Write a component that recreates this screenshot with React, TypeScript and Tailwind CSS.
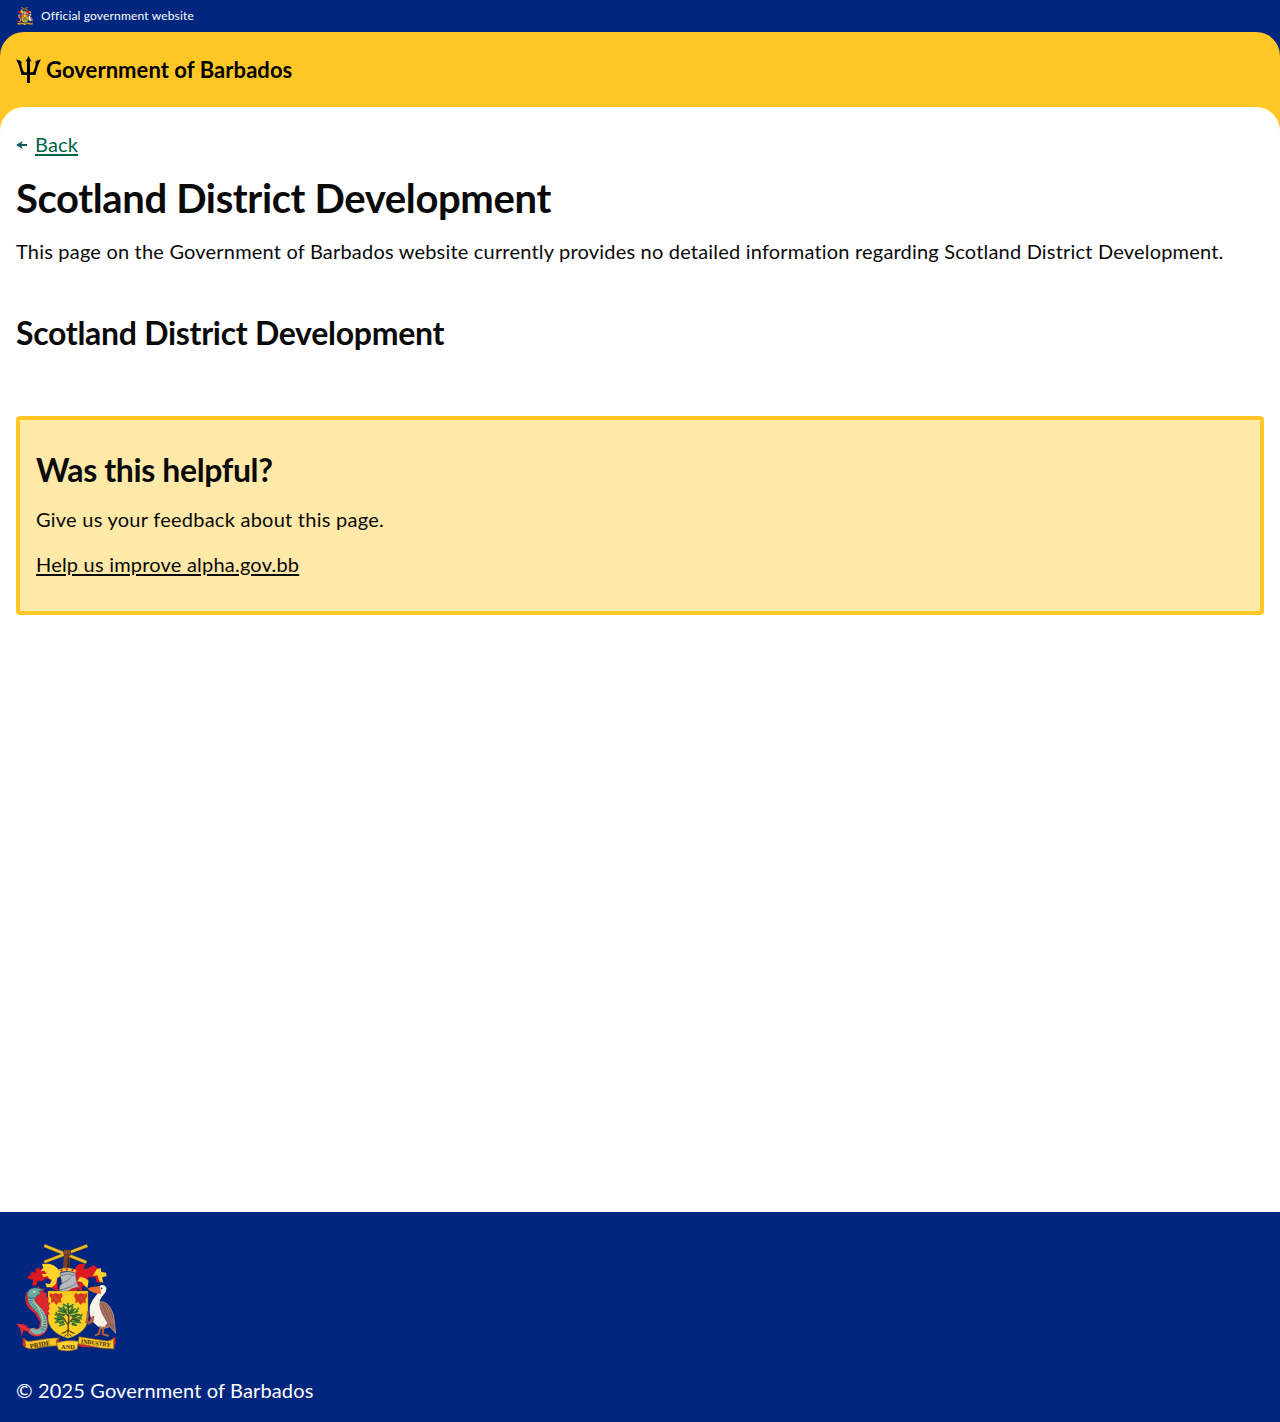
import React from "react";

function CoatOfArms({ className }: { className: string }) {
  return (
    <svg viewBox="0 0 100 108" className={className} aria-label="Coat of arms of Barbados">
      <g transform="translate(-2 -2) scale(.33333)">
        {/* mantling */}
        <path d="M128 92C112 72 96 72 78 82l-4-6-10 6 2 10-14-4-2 12-12 4 6 6 14 4-4 14 12 4 6-16 12 2 12-10 14 6-2 22 24 12z" fill="#dc1822" />
        <path d="M136 86C120 62 98 64 84 66l4 12-8 10 12-2 6 10-14 0 4 10 12-4 6 8 8 4-6 12-14-2 4 12 16 0 12-10 4-18 14-8z" fill="#ffd32c" />
        <path d="M180 90c4-20 14-28 34-24l-6 16 16-4 14-8 14 8 8 10 12 4 2 12-14 4 2 16-14-4-4-14-20 0-4 14 2 14-16-2-4 18-20-20z" fill="#dc1822" />
        <path d="M248 82l12-4 2 12 14 2 2 10-14 4 4 16-12-4-6-18-14 2zM198 104l14 4 12 8-4 22-10-8-6-10-14-2z" fill="#ffd32c" />
        {/* raised arm and crossed canes */}
        <path d="M150 40h18l-2 44h-20z" fill="#7b432c" />
        <path d="M164 40l-2 42" stroke="#4b2518" strokeWidth="5" />
        <path d="M91 11L217 61M220 11L91 60" stroke="#8a6a20" strokeWidth="10" />
        <path d="M91 11L217 61M220 11L91 60" stroke="#f2bd26" strokeWidth="7" />
        <path d="M147 29l6-7 17 3 3 12-8 8-15-3z" fill="#6d3c28" />
        <path d="M153 26l-1 10M159 26l-1 10M165 28v9" stroke="#a67041" strokeWidth="2" />
        {/* helmet */}
        <path d="M138 94q24-10 46 0l3 22 8 22q-20 0-35 13l-22-4q-5-16 6-22z" fill="#b6b9bd" stroke="#62666c" strokeWidth="2" />
        <path d="M140 101q20-9 42 0M144 124q20-8 28-19M139 143q30-4 50-21" fill="none" stroke="#74777b" strokeWidth="3" />
        <path d="M158 151q11-14 36-17l-5 12-11 6z" fill="#d41820" />
        <path d="M132 88q27-11 54 0" fill="none" stroke="#f4c62d" strokeWidth="9" />
        <path d="M141 83l3 5M157 80l3 5M174 82l3 5" stroke="#d31920" strokeWidth="6" />
        {/* shield */}
        <path d="M102 147h120v80c0 28-20 49-60 62-40-13-60-34-60-62z" fill="#fcce22" stroke="#a77b20" strokeWidth="1.500" />
        <path d="M108 153l9 4 9-4 9 4 9-4 2 10-6 8 3 11-8-2-8 9-7-9-9 2 1-13-6-7zM184 153l9 4 9-4 8 4 9-4v12l-5 7 2 12-9-3-7 8-7-9-9 3 1-12-5-8 3-6z" fill="#dd3020" />
        <path d="M114 160l22 20M138 160l-22 20M190 160l22 20M213 160l-22 20" stroke="#a96620" strokeWidth="4" strokeDasharray="5 3" />
        <path d="M162 188q4 36 0 82M162 249l-13-20-17-10M163 244l18-19 17-8M162 222l-14-19M163 219l13-19M150 229l-22 5M176 231l22 4" fill="none" stroke="#564022" strokeWidth="4" />
        <path d="M162 263l-13 11M162 263l15 11M162 265v19M157 269l-14 5M168 269l14 5M158 277l-8 7M166 277l7 6" fill="none" stroke="#463016" strokeWidth="3" />
        <path d="M162 184v12M158 193l-10-6M164 197l13-9M159 203l-19-4M163 207l20-6M157 213l-24-6M165 215l26-7M152 218l-28 0M170 221l28-2M147 226l-24 4M176 228l26 2M151 237l-27 4M173 238l26 4M151 246l-14 5M175 247l12 3M145 210l-11-14M184 212l9-13M133 226l-6-15M195 229l9-11M153 207l-5-13M172 208l3-14" stroke="#387a38" strokeWidth="5" strokeLinecap="round" />
        <path d="M161 199l9-8M159 210l-14-5M166 213l14-8M151 222l-17-8M175 224l16-9M146 231l-19 4M178 233l18 5M150 241l-14 4M173 244l12 3" stroke="#165b30" strokeWidth="3.500" />
        {/* dolphin */}
        <path d="M63 145l12-14 2 9 17 0-8 9 13 4-3 10 8 6-3 10 8 5-5 8 3 8-5 8 6 9-20 4-20-35-10-26zM38 148c-8 22-4 40 9 53l16 14 15 25-5 30 18-20 3-13-9-25-22-23-10-25z" fill="#dc2630" />
        <path d="M51 152c-5 39 17 39 31 62 11 18 13 44-2 54-12 8-28 1-30-8" fill="none" stroke="#c52a34" strokeWidth="24" />
        <path d="M51 152c-5 39 17 39 31 62 11 18 13 44-2 54-12 8-28 1-30-8" fill="none" stroke="#7fb9b2" strokeWidth="18" />
        <path d="M49 160c-3 31 18 33 32 57 10 18 11 39 0 49" fill="none" stroke="#397f91" strokeWidth="14" strokeDasharray="3 4" />
        <path d="M57 179q15 10 25 37 8 20 4 37" fill="none" stroke="#d8d98a" strokeWidth="3" />
        <path d="M40 165c-3-19 12-30 29-27l19 4-13 6 6 8-12 4-5 9z" fill="#6bada5" stroke="#285f62" strokeWidth="2" />
        <circle cx="61" cy="149" r="3" fill="#f7e8ad" />
        <path d="M7 245l23 2 19 14-2 9-18-5-6 18-5-23z" fill="#df2732" />
        <path d="M12 248l31 16M49 268q17 21 38 5" fill="none" stroke="#df3942" strokeWidth="4" />
        {/* pelican */}
        <path d="M252 181c25-7 39 13 47 40l6 53-17-20-24 7c-22-13-30-36-27-61z" fill="#936254" stroke="#ddb2a0" strokeWidth="2" />
        <path d="M260 188l26 57M270 186l26 61M253 199l22 55M280 190l19 52" stroke="#b17c6a" strokeWidth="3" />
        <path d="M250 141c6-16 24-15 27-3 3 15-17 24-20 40-4 24 10 42 23 66l-12 15c-28-7-42-30-41-56 0-26 19-38 24-50z" fill="#f7f3e9" />
        <path d="M257 132l-27 4-10 4c10 10 25 15 42 15z" fill="#e96b2a" />
        <circle cx="263" cy="139" r="2.500" fill="#22212a" />
        <path d="M260 253l-5 23-12 4M268 254l-2 22 18 6M234 226l-7 17 8-5 3-16M227 241l-10-1 4-15M221 225v-17" fill="none" stroke="#b55b3f" strokeWidth="6" />
        {/* motto ribbon */}
        <path d="M26 286l14 14 77-5 20-11-3 20-92 15-16-8zM304 284l-25 15-86 0 0 12 12 4 90 2 10-10z" fill="#dc2630" />
        <path d="M30 288q3 10 17 10l61-9q14-2 26-1-12 7-3 23-43 2-67 9-17 4-31-4 4-10-3-28zM195 284l84 13q13 1 21-8-3 14 0 32-40 0-80-11-16-3-28-5z" fill="#f7c629" stroke="#8a5b1b" strokeWidth="2" />
        <path d="M127 302q35-10 67-4l-5 24q-28 9-56 1z" fill="#ffd231" stroke="#8a5b1b" strokeWidth="2" />
        <g fill="#3d2914" fontFamily="Liberation Serif" fontWeight="bold">
          <text x="49" y="320" fontSize="21" textLength="62" lengthAdjust="spacingAndGlyphs" transform="rotate(-10 49 320)">PRIDE</text>
          <text x="141" y="321" fontSize="20" textLength="42" lengthAdjust="spacingAndGlyphs">AND</text>
          <text x="200" y="304" fontSize="18" textLength="90" lengthAdjust="spacingAndGlyphs" transform="rotate(7 200 304)">INDUSTRY</text>
        </g>
      </g>
    </svg>
  );
}

function Trident() {
  return (
    <svg viewBox="0 0 25 27" className="h-[27px] w-[25px] shrink-0" fill="#000" aria-hidden="true">
      <path d="M12.500 0L15.500 5.800 14 5.300V16.300H17C18.700 13 19.500 9.800 19.900 6.500L18.500 7C19.900 4.700 22.200 3.900 25 3.500 22.300 7.500 20.900 13.200 19.500 19H14V27H11V19H5.500C4.100 13.200 2.700 7.500 0 3.500 2.800 3.900 5.100 4.700 6.500 7L5.100 6.500C5.500 9.800 6.300 13 8 16.300H11V5.300L9.500 5.800Z" />
    </svg>
  );
}

export default function App() {
  return (
    <div className="flex min-h-[1422px] flex-col bg-white font-['Lato',sans-serif] text-[20px] leading-[30px] text-[#0a0a0a]">
      <div className="bg-[#00267f]">
        <div className="flex h-8 items-center gap-2 px-4 text-white">
          <CoatOfArms className="h-[18px] w-[17px]" />
          <span className="text-[12px] leading-4 tracking-[0.16px]">Official government website</span>
        </div>
        <header className="rounded-t-[24px] bg-[#ffc726]">
          <div className="flex h-[75px] items-center gap-[5px] px-4">
            <Trident />
            <span className="text-[22px] font-bold leading-7 tracking-[0.06px] text-black">Government of Barbados</span>
          </div>
          <div className="h-6 rounded-t-[24px] bg-white" />
        </header>
      </div>
      <main className="-mt-0.5 flex-1 px-4">
        <a href="#" className="flex w-fit items-center gap-2 text-[#00654a]">
          <svg viewBox="0 0 11 8" className="mt-0.5 h-2 w-[11px]" fill="#0e5f64" aria-hidden="true">
            <path d="M0 4L6.800 0 5.600 3H11V5H5.600L6.800 8Z" />
          </svg>
          <span className="tracking-[0.15px] underline decoration-2 underline-offset-2">Back</span>
        </a>
        <h1 className="mt-4 w-fit text-[40px] font-bold leading-[46px] tracking-[-0.37px]">Scotland District Development</h1>
        <p className="mt-[15px] w-fit whitespace-nowrap tracking-[0.194px]">This page on the Government of Barbados website currently provides no detailed information regarding Scotland District Development.</p>
        <h2 className="mt-[47px] w-fit text-[32px] font-bold leading-10 tracking-[-0.29px]">Scotland District Development</h2>
        <section className="mt-[63px] h-[199px] rounded border-4 border-[#ffc726] bg-[#ffe9a8] px-4 pt-[30px]">
          <h2 className="w-fit text-[32px] font-bold leading-10 tracking-[-0.37px]">Was this helpful?</h2>
          <p className="mt-3.5 w-fit tracking-[0.25px]">Give us your feedback about this page.</p>
          <a href="#" className="mt-[15px] block w-fit tracking-[0.21px] underline decoration-2 underline-offset-2">Help us improve alpha.gov.bb</a>
        </section>
      </main>
      <footer className="h-[210px] bg-[#00267f] px-4 pt-8 text-white">
        <CoatOfArms className="h-[108px] w-[100px]" />
        <p className="mt-[23px] w-fit tracking-[0.14px]">© 2025 Government of Barbados</p>
      </footer>
    </div>
  );
}
